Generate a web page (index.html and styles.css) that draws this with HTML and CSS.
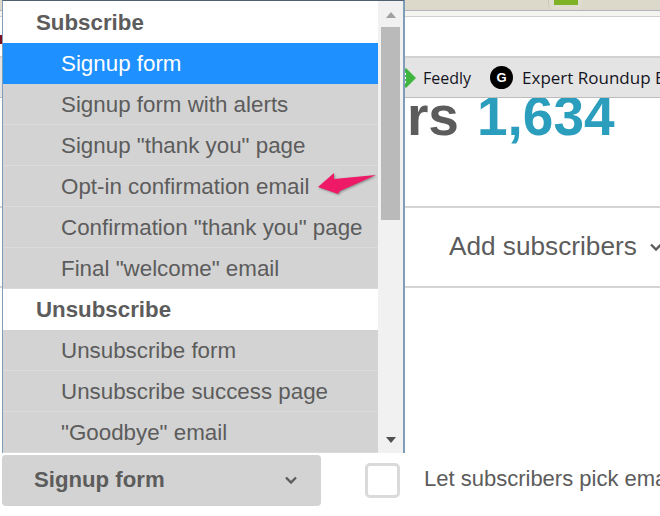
FILE: index.html
```html
<!DOCTYPE html>
<html lang="en">
<head>
<meta charset="utf-8">
<title>Subscribers</title>
<link rel="stylesheet" href="styles.css">
</head>
<body>
<div class="page">
  <div class="tabstrip">
    <span class="tab-shape"><span class="tab-green"></span></span>
  </div>
  <div class="toolbar"><span class="edge-mark"></span></div>
  <div class="bookmarks">
    <span class="bookmark">
      <svg class="feedly-icon" viewBox="0 0 22 22" aria-hidden="true"><path class="feedly-shape" d="M11 1 21 11 11 21 1 11Z"/><circle class="feedly-dot" cx="10" cy="7" r="1.200"/><circle class="feedly-dot" cx="10" cy="11" r="1.200"/><circle class="feedly-dot" cx="10" cy="15" r="1.200"/></svg>
      Feedly
    </span>
    <span class="bookmark bookmark-clip">
      <span class="g-icon">G</span>
      Expert Roundup Blog
    </span>
  </div>
  <h1 class="stats"><span>Subscribers</span><span class="count">1,634</span></h1>
  <div class="actions">
    <span class="action">Add subscribers</span>
    <svg class="chevron" viewBox="0 0 12 8" aria-hidden="true"><path d="M1 1.500 6 6.500l5-5"/></svg>
  </div>
  <div class="controls">
    <button class="form-select" type="button">
      <span>Signup form</span>
      <svg class="chevron" viewBox="0 0 12 8" aria-hidden="true"><path d="M1 1.500 6 6.500l5-5"/></svg>
    </button>
    <span class="checkbox"></span>
    <span class="checkbox-label">Let subscribers pick email preferences</span>
  </div>
</div>

<div class="dropdown">
  <ul class="menu">
    <li class="menu-group">Subscribe</li>
    <li class="menu-item selected">Signup form</li>
    <li class="menu-item">Signup form with alerts</li>
    <li class="menu-item">Signup "thank you" page</li>
    <li class="menu-item">Opt-in confirmation email</li>
    <li class="menu-item">Confirmation "thank you" page</li>
    <li class="menu-item">Final "welcome" email</li>
    <li class="menu-group">Unsubscribe</li>
    <li class="menu-item">Unsubscribe form</li>
    <li class="menu-item">Unsubscribe success page</li>
    <li class="menu-item">"Goodbye" email</li>
  </ul>
  <div class="scrollbar">
    <span class="arrow-up"></span>
    <span class="thumb"></span>
    <span class="arrow-down"></span>
  </div>
</div>

<svg class="annotation" viewBox="0 0 64 26" aria-hidden="true"><path d="M2 16 18 2 18 8 60 4 24 20 22 23Z"/></svg>
</body>
</html>
```

FILE: styles.css
```css
* { box-sizing: border-box; }

html, body {
  margin: 0;
  padding: 0;
  width: 660px;
  height: 516px;
  overflow: hidden;
  background: #fff;
  font-family: "Liberation Sans", Arial, sans-serif;
  color: #5c5c5c;
}

.page {
  display: flex;
  flex-direction: column;
  width: 660px;
  height: 516px;
  overflow: hidden;
}

.tabstrip {
  height: 11px;
  flex: none;
  background: #dcd9ca;
  border-bottom: 1px solid #b4b4bf;
  padding-left: 548px;
}

.tab-shape {
  display: block;
  width: 34px;
  height: 10px;
  padding-left: 5px;
  background: #e0ddd0;
  border-radius: 0 0 6px 6px;
  border-left: 1px solid #c9c6b8;
}

.tab-green {
  display: block;
  width: 24px;
  height: 5px;
  background: #7fb325;
}

.toolbar {
  height: 45px;
  flex: none;
  padding-top: 19px;
  background: #fff;
  border-top: 5px solid #f3f3ef;
  box-shadow: inset 0 1px 0 #cfcfcf;
}

.edge-mark {
  display: block;
  width: 2px;
  height: 9px;
  background: #7a1020;
}

.bookmarks {
  position: relative;
  z-index: 1;
  display: flex;
  align-items: center;
  gap: 19px;
  height: 42px;
  flex: none;
  padding-left: 395px;
  background: #e4e4e4;
  border-top: 2px solid #d2d2d2;
  border-bottom: 1px solid #bdbdbd;
  font-family: "Open Sans", sans-serif;
  font-size: 16px;
  color: #14141e;
  white-space: nowrap;
}

.bookmark {
  display: flex;
  align-items: center;
  gap: 6px;
}

.bookmark-clip {
  font-size: 17px;
  gap: 9px;
}

.feedly-icon { width: 22px; height: 22px; }
.feedly-shape { fill: #3fb53f; }
.feedly-dot { fill: #fff; }

.g-icon {
  display: flex;
  align-items: center;
  justify-content: center;
  width: 23px;
  height: 23px;
  border-radius: 50%;
  background: #000;
  color: #fff;
  font-family: "Liberation Sans", sans-serif;
  font-size: 13px;
  font-weight: 700;
}

.stats {
  display: flex;
  gap: 18px;
  height: 110px;
  flex: none;
  margin: 0;
  padding-left: 141px;
  font-size: 55px;
  font-weight: 700;
  line-height: 36px;
  border-bottom: 2px solid #d4d4d4;
  white-space: nowrap;
}

.count { color: #2b9dbd; }

.actions {
  display: flex;
  align-items: center;
  gap: 13px;
  height: 80px;
  flex: none;
  padding-left: 449px;
  padding-bottom: 1px;
  border-bottom: 2px solid #d4d4d4;
  font-size: 26.200px;
  white-space: nowrap;
}

.chevron {
  width: 12px;
  height: 8px;
  flex: none;
  fill: none;
  stroke: #5c5c5c;
  stroke-width: 2.400;
}

.controls {
  display: flex;
  align-items: center;
  height: 51px;
  flex: none;
  margin-top: 167px;
  padding-left: 2px;
  white-space: nowrap;
}

.form-select {
  display: flex;
  align-items: center;
  justify-content: space-between;
  width: 319px;
  height: 51px;
  flex: none;
  padding: 0 24px 2px 32px;
  border: 0;
  border-radius: 4px;
  background: #d3d3d3;
  color: #5c5c5c;
  font: 700 22.200px "Liberation Sans", sans-serif;
}

.checkbox {
  width: 35px;
  height: 35px;
  flex: none;
  margin-left: 44px;
  border: 3px solid #dadada;
  border-radius: 5px;
  background: #fff;
}

.checkbox-label {
  margin-left: 24px;
  padding-bottom: 3px;
  font-size: 22px;
}

.dropdown {
  position: absolute;
  z-index: 2;
  left: 2px;
  top: 0;
  display: flex;
  width: 403px;
  height: 453px;
  background: #fff;
  border: 1px solid #7f9db9;
  border-width: 1px 2px 0 1px;
  border-top-color: #4f5f70;
}

.menu {
  width: 375px;
  flex: none;
  margin: 0;
  padding: 1px 0 0;
  list-style: none;
}

.menu-group {
  height: 41px;
  padding-left: 33px;
  background: #fff;
  font-size: 22.300px;
  font-weight: 700;
  line-height: 41px;
}

.menu-item {
  height: 41px;
  padding-left: 58px;
  background: #d3d3d3;
  border-bottom: 1px solid #dbdbdb;
  font-size: 22.350px;
  line-height: 42px;
}

.selected {
  background: #1e90ff;
  border-bottom-color: #1e90ff;
  color: #fff;
}

.scrollbar {
  display: flex;
  flex: 1;
  flex-direction: column;
  align-items: center;
  background: #f1f1f1;
  padding-top: 11px;
}

.arrow-up {
  width: 0;
  height: 0;
  border: 5px solid transparent;
  border-top: 0;
  border-bottom: 6px solid #a0a0a0;
}

.thumb {
  width: 19px;
  height: 193px;
  margin-top: 9px;
  background: #bababa;
}

.arrow-down {
  width: 0;
  height: 0;
  margin-top: auto;
  margin-bottom: 10px;
  border: 5px solid transparent;
  border-bottom: 0;
  border-top: 6px solid #505050;
}

.annotation {
  position: absolute;
  z-index: 3;
  left: 316px;
  top: 171px;
  width: 64px;
  height: 26px;
  fill: #ee1a67;
  filter: drop-shadow(1px 1px 1px rgba(60, 60, 60, 0.5));
}
```
